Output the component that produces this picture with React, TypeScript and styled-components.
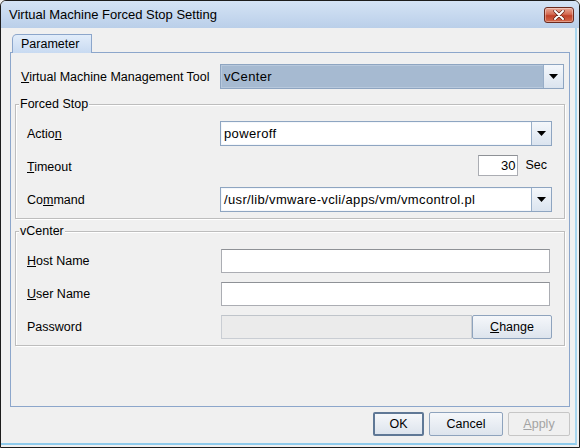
import React from 'react'
import styled, { createGlobalStyle } from 'styled-components'

const GlobalStyle = createGlobalStyle`
  html, body {
    margin: 0;
    padding: 0;
    background: #f0f0f0;
  }
  body {
    font-family: 'Liberation Sans', Arial, sans-serif;
    font-size: 12px;
    color: #000;
  }
`

const Window = styled.div`
  width: 580px;
  height: 448px;
  box-sizing: border-box;
  display: flex;
  flex-direction: column;
  background: #f0f0f0;
  border: 1px solid #1c1c1c;
  border-radius: 6px 6px 0 0;
  overflow: hidden;
`

const TitleBar = styled.div`
  height: 27px;
  flex: none;
  display: flex;
  align-items: center;
  justify-content: space-between;
  padding: 0 5px 0 8px;
  background: linear-gradient(#d4e3f5, #bacfe9);
  font-size: 13px;
`

const CloseButton = styled.div`
  width: 30px;
  height: 16px;
  box-sizing: border-box;
  margin-top: 1px;
  display: flex;
  align-items: center;
  justify-content: center;
  border: 1px solid #6b2a1e;
  border-radius: 3px;
  background: linear-gradient(#e9a998 0%, #d46a52 45%, #c0412a 55%, #d56b4c 100%);
  box-shadow: inset 0 0 0 1px rgba(255, 255, 255, 0.35);
`

const Client = styled.div`
  flex: 1;
  display: flex;
  flex-direction: column;
  margin: 0 2px 2px 0;
  padding: 6px 5px 7px 9px;
  border-right: 2px solid #a8d6ee;
  border-bottom: 2px solid #8fcbec;
`

const TabStrip = styled.div`
  display: flex;
  height: 18px;
  flex: none;
`

const Tab = styled.div`
  position: relative;
  z-index: 1;
  margin-left: 2px;
  width: 80px;
  height: 19px;
  box-sizing: border-box;
  padding: 2px 0 0 8px;
  border: 1px solid #8ca6cb;
  border-bottom: none;
  border-top-left-radius: 5px;
  background: linear-gradient(#e2edfa, #c8daf1);
  font-size: 12.5px;
`

const TabPanel = styled.div`
  flex: 1;
  display: flex;
  flex-direction: column;
  border: 1px solid #8ca6cb;
  padding: 11px 4px 0 4px;
`

const Row = styled.div<{ $label: number; $padLeft: number; $padRight: number; $height: number }>`
  display: grid;
  grid-template-columns: ${(p) => p.$label}px 1fr;
  align-items: center;
  height: ${(p) => p.$height}px;
  padding: 0 ${(p) => p.$padRight}px 0 ${(p) => p.$padLeft}px;
`

const Label = styled.span`
  white-space: nowrap;
  font-size: 12.5px;
`

const U = styled.span`
  text-decoration: underline;
  text-underline-offset: 1px;
`

const Group = styled.div<{ $gap: number }>`
  position: relative;
  margin-top: ${(p) => p.$gap}px;
  padding: 12px 12px 2px 11px;
  border: 1px solid #bdbdbd;
  box-shadow: inset 1px 1px 0 #fff, 1px 1px 0 #fff;
`

const Legend = styled.span`
  position: absolute;
  top: -8px;
  left: 3px;
  padding: 0 1px;
  background: #f0f0f0;
  font-size: 12.5px;
`

const Combo = styled.div<{ $selected?: boolean }>`
  display: flex;
  height: 25px;
  box-sizing: border-box;
  border: 1px solid #8ea5c1;
  background: ${(p) => (p.$selected ? '#a6bad1' : '#fff')};
  box-shadow: inset 0 0 0 1px ${(p) => (p.$selected ? '#b7c8dc' : '#f4f7fb')};
`

const ComboValue = styled.span`
  flex: 1;
  display: flex;
  align-items: center;
  padding-left: 3px;
  white-space: nowrap;
  overflow: hidden;
  font-size: 13px;
  letter-spacing: 0.35px;
`

const ArrowButton = styled.span`
  width: 19px;
  flex: none;
  display: flex;
  align-items: center;
  justify-content: center;
  border-left: 1px solid #98aec8;
  background: linear-gradient(#f4f7fb, #dbe4ef);
`

const TextField = styled.div<{ $disabled?: boolean }>`
  height: 24px;
  box-sizing: border-box;
  flex: 1;
  border: 1px solid ${(p) => (p.$disabled ? '#c9cdd3' : '#abadb3')};
  border-top-color: ${(p) => (p.$disabled ? '#bfc4ca' : '#8e9196')};
  background: ${(p) => (p.$disabled ? '#ebebeb' : '#fff')};
  margin-right: 2px;
`

const NumberField = styled.div`
  width: 40px;
  height: 21px;
  box-sizing: border-box;
  display: flex;
  align-items: center;
  justify-content: flex-end;
  padding-right: 2px;
  border: 1px solid #abadb3;
  border-top-color: #8e9196;
  background: #fff;
  font-size: 13px;
`

const Right = styled.div`
  display: flex;
  align-items: center;
  justify-content: flex-end;
  gap: 7px;
  padding-right: 5px;
  margin-top: -3px;
  font-size: 12.5px;
`

const FieldWithButton = styled.div`
  display: flex;
  align-items: center;
`

const ButtonBar = styled.div`
  display: flex;
  justify-content: flex-end;
  gap: 5px;
  margin-top: 5px;
  flex: none;
`

const Button = styled.div<{ $width: number; $focus?: boolean; $disabled?: boolean; $overlap?: boolean }>`
  width: ${(p) => p.$width}px;
  height: 24px;
  box-sizing: border-box;
  display: flex;
  align-items: center;
  justify-content: center;
  margin-left: ${(p) => (p.$overlap ? '-2px' : '0')};
  border: ${(p) => (p.$focus ? '2px solid #5f7896' : `1px solid ${p.$disabled ? '#c6c6c6' : '#8ea3bd'}`)};
  border-radius: 2px;
  background: ${(p) => (p.$disabled ? '#f0f0f0' : 'linear-gradient(#f5f7fa, #dde4ed)')};
  color: ${(p) => (p.$disabled ? '#a3a3a3' : '#000')};
  font-size: 12.5px;
  flex: none;
`

const DownArrow: React.FC = () => (
  <svg width="9" height="5" viewBox="0 0 9 5">
    <path d="M0 0h9L4.5 5z" fill="#000" />
  </svg>
)

const CloseX: React.FC = () => (
  <svg width="12" height="10" viewBox="0 0 12 10">
    <path d="M2 1l8 8M10 1L2 9" stroke="#5a1d12" strokeWidth="3.2" strokeLinecap="round" />
    <path d="M2 1l8 8M10 1L2 9" stroke="#fff" strokeWidth="2" strokeLinecap="round" />
  </svg>
)

export default function App() {
  return (
    <>
      <GlobalStyle />
      <Window>
        <TitleBar>
          <span>Virtual Machine Forced Stop Setting</span>
          <CloseButton>
            <CloseX />
          </CloseButton>
        </TitleBar>
        <Client>
          <TabStrip>
            <Tab>Parameter</Tab>
          </TabStrip>
          <TabPanel>
            <Row $label={199} $padLeft={6} $padRight={1} $height={25}>
              <Label>
                <U>V</U>irtual Machine Management Tool
              </Label>
              <Combo $selected>
                <ComboValue>vCenter</ComboValue>
                <ArrowButton>
                  <DownArrow />
                </ArrowButton>
              </Combo>
            </Row>

            <Group $gap={15}>
              <Legend>Forced Stop</Legend>
              <Row $label={193} $padLeft={0} $padRight={0} $height={33}>
                <Label>
                  Actio<U>n</U>
                </Label>
                <Combo>
                  <ComboValue>poweroff</ComboValue>
                  <ArrowButton>
                    <DownArrow />
                  </ArrowButton>
                </Combo>
              </Row>
              <Row $label={193} $padLeft={0} $padRight={0} $height={33}>
                <Label>
                  <U>T</U>imeout
                </Label>
                <Right>
                  <NumberField>30</NumberField>
                  <span>Sec</span>
                </Right>
              </Row>
              <Row $label={193} $padLeft={0} $padRight={0} $height={33}>
                <Label>
                  Co<U>m</U>mand
                </Label>
                <Combo>
                  <ComboValue>/usr/lib/vmware-vcli/apps/vm/vmcontrol.pl</ComboValue>
                  <ArrowButton>
                    <DownArrow />
                  </ArrowButton>
                </Combo>
              </Row>
            </Group>

            <Group $gap={12}>
              <Legend>vCenter</Legend>
              <Row $label={194} $padLeft={0} $padRight={0} $height={33}>
                <Label>
                  <U>H</U>ost Name
                </Label>
                <FieldWithButton>
                  <TextField />
                </FieldWithButton>
              </Row>
              <Row $label={194} $padLeft={0} $padRight={0} $height={33}>
                <Label>
                  <U>U</U>ser Name
                </Label>
                <FieldWithButton>
                  <TextField />
                </FieldWithButton>
              </Row>
              <Row $label={194} $padLeft={0} $padRight={0} $height={33}>
                <Label>Password</Label>
                <FieldWithButton>
                  <TextField $disabled />
                  <Button $width={80} $overlap>
                    <span>
                      <U>C</U>hange
                    </span>
                  </Button>
                </FieldWithButton>
              </Row>
            </Group>
          </TabPanel>
          <ButtonBar>
            <Button $width={51} $focus>
              OK
            </Button>
            <Button $width={74}>Cancel</Button>
            <Button $width={62} $disabled>
              <span>
                <U>A</U>pply
              </span>
            </Button>
          </ButtonBar>
        </Client>
      </Window>
    </>
  )
}
